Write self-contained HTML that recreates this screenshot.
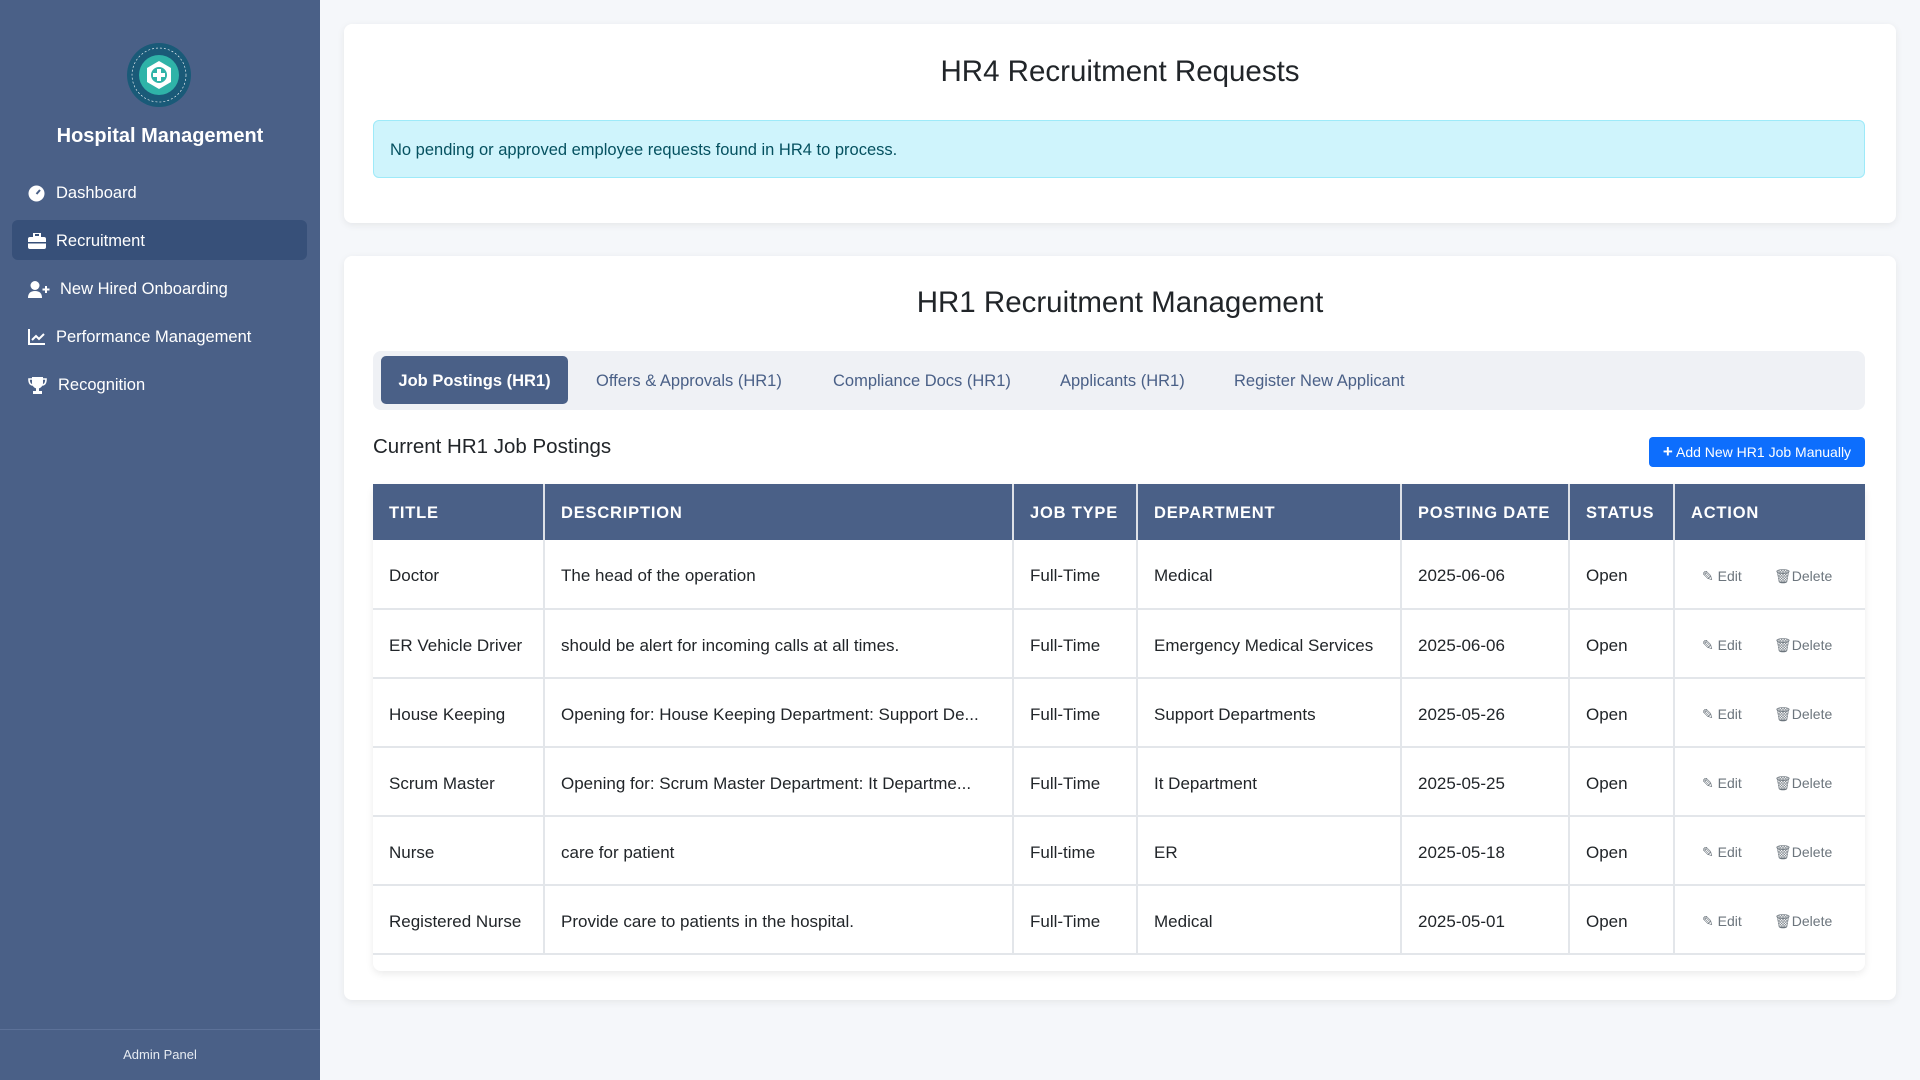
<!DOCTYPE html>
<html><head><meta charset="utf-8"><style>
*{box-sizing:border-box;margin:0;padding:0}
body{width:1920px;height:1080px;background:#f5f7fa;font-family:"Liberation Sans",sans-serif;color:#212529;position:relative;overflow:hidden}
.sb{position:absolute;left:0;top:0;width:320px;height:1080px;background:#4a6087;color:#fff}
.sb h1{position:absolute;top:125px;width:320px;text-align:center;font-size:20px;font-weight:bold}
.nav{position:absolute;left:12px;width:295px;height:40px;border-radius:6px;font-size:16.5px;line-height:42px;padding-left:44px}
.nav svg{position:absolute;left:16px;top:13px}
.nav.act{background:#375079}
.foot{position:absolute;bottom:0;left:0;width:320px;height:51px;border-top:1px solid #5c7198;text-align:center;font-size:13px;line-height:50px;color:#e6ebf2}
.card{position:absolute;left:344px;width:1552px;background:#fff;border-radius:8px;box-shadow:0 2px 8px rgba(0,0,0,.07)}
.card h2{text-align:center;font-size:29.5px;font-weight:normal;position:absolute;width:100%}
.alert{position:absolute;left:29px;top:96px;width:1492px;height:58px;background:#cff4fc;border:1px solid #9eeaf9;border-radius:6px;color:#055160;font-size:16.5px;line-height:58px;padding-left:16px}
.tabs{position:absolute;left:29px;top:95px;width:1492px;height:59px;background:#eff1f5;border-radius:8px}
.tab{position:absolute;top:5px;height:48px;line-height:51px;font-size:16.5px;color:#4a6087}
.tab.act{left:8px;width:187px;background:#4a6087;color:#fff;font-weight:bold;border-radius:5px;text-align:center}
table{position:absolute;left:29px;top:228px;width:1492px;border-collapse:collapse;font-size:17px}
th{background:#4a6087;color:#fff;text-align:left;font-size:16.5px;letter-spacing:.8px;height:56px;padding-left:16px;padding-top:3px;border-right:2px solid #dde1e7}
th:last-child,td:last-child{border-right:none}
td{height:69px;padding-left:16px;padding-top:4px;border-right:2px solid #e3e6ea;border-bottom:2px solid #e3e6ea}
.ac{color:#6c757d;font-size:14px;padding-left:27px}
.ac span{display:inline-block;width:72px}
</style></head><body>
<div class="sb">
<svg style="position:absolute;left:127px;top:43px" width="64" height="64" viewBox="0 0 64 64"><circle cx="32" cy="32" r="32" fill="#1a5a78"/><circle cx="32" cy="32" r="20" fill="#2fb3a8"/><polygon points="32,18 44,25 44,39 32,46 20,39 20,25" fill="#fff"/><circle cx="32" cy="32" r="8" fill="#2fb3a8"/><rect x="30" y="26" width="4" height="12" fill="#fff"/><rect x="26" y="30" width="12" height="4" fill="#fff"/><circle cx="32" cy="32" r="27" fill="none" stroke="#fff" stroke-width=".6" stroke-dasharray="2 2"/></svg>
<h1>Hospital Management</h1>
<div class="nav" style="top:172px"><svg width="17" height="17"><circle cx="8.5" cy="8.5" r="8" fill="#fff"/><line x1="8.5" y1="9" x2="12" y2="5" stroke="#4a6087" stroke-width="2"/></svg>Dashboard</div>
<div class="nav act" style="top:220px"><svg width="18" height="16"><rect x="6" y="0" width="6" height="4" fill="none" stroke="#fff" stroke-width="2"/><rect x="0" y="4" width="18" height="12" rx="2" fill="#fff"/><rect x="0" y="9" width="18" height="1.5" fill="#375079"/></svg>Recruitment</div>
<div class="nav" style="top:268px;padding-left:48px"><svg width="22" height="17"><circle cx="7" cy="4.5" r="4.5" fill="#fff"/><path d="M0 17 Q0 10 7 10 Q14 10 14 17Z" fill="#fff"/><path d="M18 5v7M14.5 8.5h7" stroke="#fff" stroke-width="2"/></svg>New Hired Onboarding</div>
<div class="nav" style="top:316px"><svg width="17" height="16"><path d="M1 0v15h16" stroke="#fff" stroke-width="2" fill="none"/><path d="M4 11l4-4 3 3 5-5" stroke="#fff" stroke-width="2" fill="none"/></svg>Performance Management</div>
<div class="nav" style="top:364px;padding-left:46px"><svg width="19" height="17"><path d="M4 0h11v6a5.5 5.5 0 0 1-11 0z" fill="#fff"/><path d="M4 2H1q0 6 4 6M15 2h3q0 6-4 6" stroke="#fff" stroke-width="1.6" fill="none"/><rect x="8" y="10" width="3" height="4" fill="#fff"/><rect x="5" y="14" width="9" height="3" fill="#fff"/></svg>Recognition</div>
<div class="foot">Admin Panel</div>
</div>

<div class="card" style="top:24px;height:199px">
<h2 style="top:31px">HR4 Recruitment Requests</h2>
<div class="alert">No pending or approved employee requests found in HR4 to process.</div>
</div>

<div class="card" style="top:256px;height:744px">
<h2 style="top:30px">HR1 Recruitment Management</h2>
<div class="tabs">
<div class="tab act">Job Postings (HR1)</div>
<div class="tab" style="left:223px">Offers &amp; Approvals (HR1)</div>
<div class="tab" style="left:460px">Compliance Docs (HR1)</div>
<div class="tab" style="left:687px">Applicants (HR1)</div>
<div class="tab" style="left:861px">Register New Applicant</div>
</div>
<div style="position:absolute;left:29px;top:179px;font-size:20.5px">Current HR1 Job Postings</div>
<div style="position:absolute;left:1305px;top:181px;width:216px;height:30px;background:#0d6efd;color:#fff;border-radius:4px;font-size:14px;line-height:30px;text-align:center"><b style="font-size:17px">+</b> Add New HR1 Job Manually</div>
<div style="position:absolute;left:29px;top:228px;width:1492px;height:487px;box-shadow:0 3px 8px rgba(0,0,0,.08);border-radius:8px"></div>
<table>
<tr><th style="width:171px">TITLE</th><th style="width:469px">DESCRIPTION</th><th style="width:124px">JOB TYPE</th><th style="width:264px">DEPARTMENT</th><th style="width:168px">POSTING DATE</th><th style="width:105px">STATUS</th><th>ACTION</th></tr>
<tr><td>Doctor</td><td>The head of the operation</td><td>Full-Time</td><td>Medical</td><td>2025-06-06</td><td>Open</td><td class="ac"><span>✎ Edit</span>🗑Delete</td></tr>
<tr><td>ER Vehicle Driver</td><td>should be alert for incoming calls at all times.</td><td>Full-Time</td><td>Emergency Medical Services</td><td>2025-06-06</td><td>Open</td><td class="ac"><span>✎ Edit</span>🗑Delete</td></tr>
<tr><td>House Keeping</td><td>Opening for: House Keeping Department: Support De...</td><td>Full-Time</td><td>Support Departments</td><td>2025-05-26</td><td>Open</td><td class="ac"><span>✎ Edit</span>🗑Delete</td></tr>
<tr><td>Scrum Master</td><td>Opening for: Scrum Master Department: It Departme...</td><td>Full-Time</td><td>It Department</td><td>2025-05-25</td><td>Open</td><td class="ac"><span>✎ Edit</span>🗑Delete</td></tr>
<tr><td>Nurse</td><td>care for patient</td><td>Full-time</td><td>ER</td><td>2025-05-18</td><td>Open</td><td class="ac"><span>✎ Edit</span>🗑Delete</td></tr>
<tr><td>Registered Nurse</td><td>Provide care to patients in the hospital.</td><td>Full-Time</td><td>Medical</td><td>2025-05-01</td><td>Open</td><td class="ac"><span>✎ Edit</span>🗑Delete</td></tr>
</table>
</div>
</body></html>
